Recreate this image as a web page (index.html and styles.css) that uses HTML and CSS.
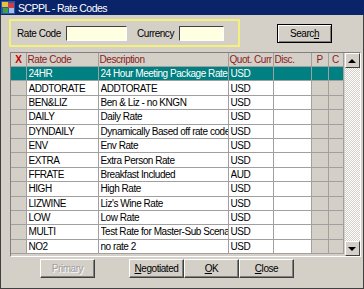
FILE: index.html
```html
<!DOCTYPE html>
<html lang="en">
<head>
  <meta charset="UTF-8">
  <title>SCPPL - Rate Codes</title>
  <link rel="stylesheet" href="styles.css">
</head>
<body>
  <div class="window">
    <!-- Title bar -->
    <div class="titlebar">
      <svg class="app-icon" width="14" height="13" viewBox="0 0 14 13">
        <rect x="0" y="0" width="14" height="13" fill="#2a5aa8"/>
        <rect x="1" y="1" width="6" height="5" fill="#e8c040"/>
        <rect x="7" y="2" width="6" height="5" fill="#d04040"/>
        <rect x="2" y="7" width="5" height="5" fill="#40a040"/>
        <rect x="8" y="7" width="5" height="5" fill="#a0c0e8"/>
      </svg>
      <span>SCPPL - Rate Codes</span>
    </div>

    <!-- Search filter -->
    <div class="search-row">
      <div class="filter-box">
        <label>Rate Code</label>
        <div class="field code"></div>
        <label class="cur-label">Currency</label>
        <div class="field cur"></div>
      </div>
      <button class="btn search-btn">Searc<u>h</u></button>
    </div>

    <!-- Grid -->
    <div class="grid-wrap">
      <table class="grid">
        <colgroup>
          <col style="width:15px">
          <col style="width:72px">
          <col style="width:130px">
          <col style="width:45px">
          <col style="width:38px">
          <col style="width:17px">
          <col style="width:15px">
        </colgroup>
        <thead>
          <tr>
            <th class="gutter x">X</th>
            <th>Rate Code</th>
            <th>Description</th>
            <th>Quot. Curr</th>
            <th>Disc.</th>
            <th class="c-flag">P</th>
            <th class="c-flag">C</th>
          </tr>
        </thead>
        <tbody id="rows"></tbody>
      </table>
      <div class="scrollbar">
        <div class="sb-btn"><span class="arrow up"></span></div>
        <div class="sb-track"></div>
        <div class="sb-btn"><span class="arrow down"></span></div>
      </div>
    </div>

    <!-- Buttons -->
    <div class="button-row">
      <button class="btn disabled primary-btn">Primary</button>
      <button class="btn"><u>N</u>egotiated</button>
      <button class="btn"><u>O</u>K</button>
      <button class="btn"><u>C</u>lose</button>
    </div>
  </div>

  <script>
    // rate codes list
    const rates = [
      ["24HR", "24 Hour Meeting Package Rate", "USD"],
      ["ADDTORATE", "ADDTORATE", "USD"],
      ["BEN&LIZ", "Ben & Liz - no KNGN", "USD"],
      ["DAILY", "Daily Rate", "USD"],
      ["DYNDAILY", "Dynamically Based off rate code", "USD"],
      ["ENV", "Env Rate", "USD"],
      ["EXTRA", "Extra Person Rate", "USD"],
      ["FFRATE", "Breakfast Included", "AUD"],
      ["HIGH", "High Rate", "USD"],
      ["LIZWINE", "Liz's Wine Rate", "USD"],
      ["LOW", "Low Rate", "USD"],
      ["MULTI", "Test Rate for Master-Sub Scenario", "USD"],
      ["NO2", "no rate 2", "USD"]
    ];

    const body = document.getElementById("rows");
    rates.forEach((r, i) => {
      const tr = document.createElement("tr");
      if (i === 0) tr.classList.add("selected");
      tr.innerHTML =
        '<td class="gutter"></td>' +
        '<td><div class="cell"></div></td>' +
        '<td><div class="cell"></div></td>' +
        '<td><div class="cell"></div></td>' +
        '<td></td><td class="flag"></td><td class="flag"></td>';
      const cells = tr.querySelectorAll(".cell");
      cells[0].textContent = r[0];
      cells[1].textContent = r[1];
      cells[2].textContent = r[2];
      body.appendChild(tr);
    });
  </script>
</body>
</html>
```

FILE: styles.css
```css
/* Base */
body {
  margin: 0;
  font-family: 'Liberation Sans', Arial, sans-serif;
  font-size: 10px;
  letter-spacing: -0.45px;
  color: #000;
}

.window {
  width: 364px;
  height: 289px;
  box-sizing: border-box;
  background-color: #d4d0c8;
  border: 1px solid #404040;
  border-top: none;
  display: flex;
  flex-direction: column;
}

/* Title bar */
.titlebar {
  height: 15px;
  flex: none;
  background-color: #0a246a;
  color: white;
  display: flex;
  align-items: center;
  gap: 3px;
  padding-left: 1px;
  font-size: 10.5px;
  letter-spacing: -0.55px;
  margin: 0 -1px;
}

.app-icon {
  flex: none;
}

/* Search area */
.search-row {
  display: flex;
  align-items: flex-start;
  padding: 4px 0 0 8px;
  height: 33px;
  flex: none;
}

.filter-box {
  width: 221px;
  height: 24px;
  border: 2px solid #f4f07c;
  display: flex;
  align-items: center;
  padding-left: 6px;
  flex: none;
  white-space: nowrap;
}

.filter-box label {
  width: 49px;
}

.filter-box .cur-label {
  width: 42px;
  margin-left: 10px;
}

.field {
  height: 13px;
  background-color: #ffffe1;
  border: 1px solid;
  border-color: #404040 #ffffff #ffffff #404040;
}

.field.code {
  width: 59px;
}

.field.cur {
  width: 43px;
}

/* Buttons */
.btn {
  font-family: inherit;
  font-size: 10px;
  letter-spacing: -0.45px;
  background-color: #d4d0c8;
  border: 1px solid;
  border-color: #ffffff #404040 #404040 #ffffff;
  box-shadow: inset -1px -1px 0 #808080;
  padding: 0;
  height: 19px;
  width: 55px;
  color: #000;
  flex: none;
}

.search-btn {
  margin-left: 37px;
  margin-top: 5px;
  border-color: #000;
  box-shadow: inset 1px 1px 0 #fff, inset -1px -1px 0 #808080;
}

.btn.disabled {
  color: #a0a0a0;
  text-shadow: 1px 1px 0 #fff;
}

/* Grid */
.grid-wrap {
  margin-left: 9px;
  width: 351px;
  height: 205px;
  flex: none;
  display: flex;
  border: 1px solid;
  border-color: #808080 #ffffff #ffffff #808080;
  box-sizing: border-box;
  background-color: #d4d0c8;
}

.grid {
  border-collapse: collapse;
  table-layout: fixed;
  width: 332px;
  align-self: flex-start;
}

.grid th,
.grid td {
  border: 1px solid #a0a0a0;
  padding: 0 0 0 2px;
  white-space: nowrap;
  overflow: hidden;
  font-weight: normal;
  text-align: left;
}

.grid th {
  color: #8b1c1c;
  background-color: #d4d0c8;
  border-top: none;
  height: 13px;
  line-height: 13px;
  padding-left: 1px;
}

.grid td {
  background-color: #fff;
  height: 13.4px;
  line-height: 13px;
}

.grid .cell {
  overflow: hidden;
  white-space: nowrap;
}

.grid .gutter {
  background-color: #d4d0c8;
  border-left: none;
}

.grid th.x {
  color: #c00000;
  font-weight: bold;
  text-align: center;
  padding: 0;
}

.grid .c-flag {
  text-align: center;
  padding: 0;
}

.grid td.flag {
  background-color: #d4d0c8;
}

.grid tr.selected td {
  background-color: #008080;
  color: #fff;
}

/* Scrollbar */
.scrollbar {
  width: 16px;
  margin-left: 1px;
  display: flex;
  flex-direction: column;
}

.sb-btn {
  height: 15px;
  background-color: #d4d0c8;
  border: 1px solid;
  border-color: #ffffff #404040 #404040 #ffffff;
  box-sizing: border-box;
  display: flex;
  align-items: center;
  justify-content: center;
}

.sb-track {
  flex: 1;
  background-image: repeating-conic-gradient(#ffffff 0 25%, #d4d0c8 0 50%);
  background-size: 2px 2px;
}

.arrow {
  width: 0;
  height: 0;
  border-left: 4px solid transparent;
  border-right: 4px solid transparent;
}

.arrow.up {
  border-bottom: 4px solid #000;
}

.arrow.down {
  border-top: 4px solid #000;
}

/* Bottom buttons */
.button-row {
  display: flex;
  padding: 2px 0 0 39px;
}

.primary-btn {
  margin-right: 34px;
}
```
